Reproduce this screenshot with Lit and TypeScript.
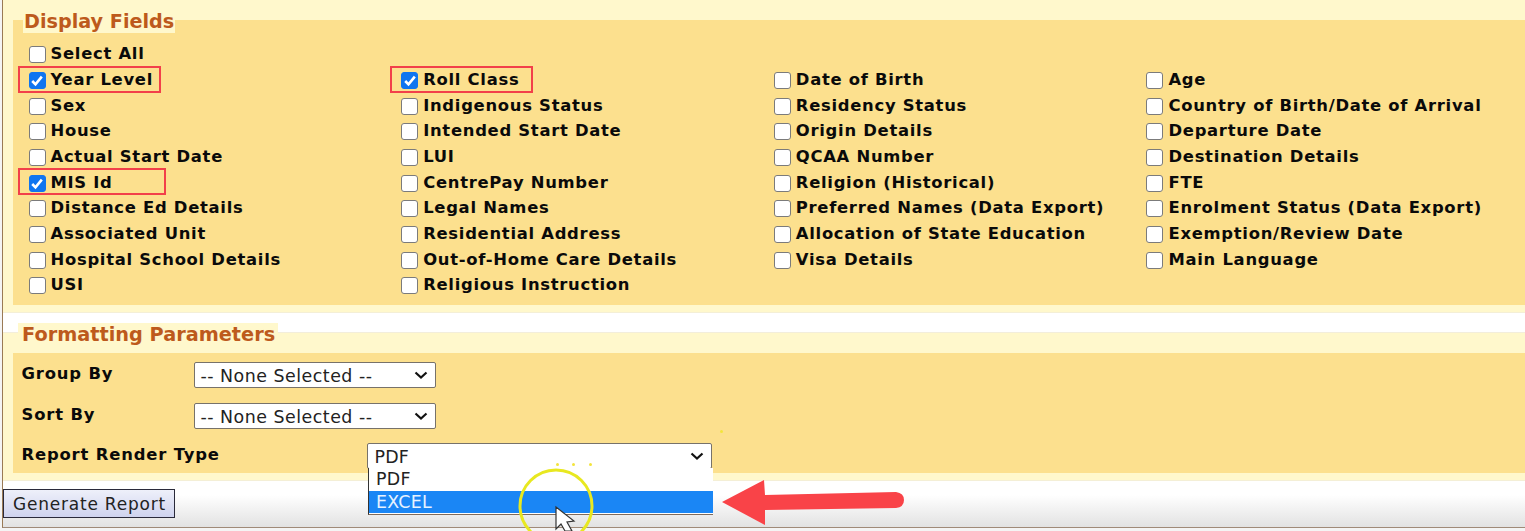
import { LitElement, html, css, svg } from "lit";
import { customElement } from "lit/decorators.js";

const fields: [string, boolean][] = [
  ["Select All", false], ["", false], ["", false], ["", false],
  ["Year Level", true], ["Roll Class", true], ["Date of Birth", false], ["Age", false],
  ["Sex", false], ["Indigenous Status", false], ["Residency Status", false], ["Country of Birth/Date of Arrival", false],
  ["House", false], ["Intended Start Date", false], ["Origin Details", false], ["Departure Date", false],
  ["Actual Start Date", false], ["LUI", false], ["QCAA Number", false], ["Destination Details", false],
  ["MIS Id", true], ["CentrePay Number", false], ["Religion (Historical)", false], ["FTE", false],
  ["Distance Ed Details", false], ["Legal Names", false], ["Preferred Names (Data Export)", false], ["Enrolment Status (Data Export)", false],
  ["Associated Unit", false], ["Residential Address", false], ["Allocation of State Education", false], ["Exemption/Review Date", false],
  ["Hospital School Details", false], ["Out-of-Home Care Details", false], ["Visa Details", false], ["Main Language", false],
  ["USI", false], ["Religious Instruction", false], ["", false], ["", false],
];

const chevron = svg`<svg class="chev" width="14" height="8" viewBox="0 0 14 8"><path d="M1.5 1.5 L7 6.5 L12.5 1.5" fill="none" stroke="#111" stroke-width="2.2"/></svg>`;

@customElement("app-root")
export class AppRoot extends LitElement {
  static styles = css`
    :host { display: block; width: 1525px; height: 531px; position: relative; overflow: hidden; background: #f4f4f4;
      font-family: "DejaVu Sans", Verdana, sans-serif; color: #0a0a0a; }
    .frame { height: 528px; border-left: 1.5px solid #9a7a55; border-bottom: 1px solid #a08a78; box-sizing: border-box; margin-left: 2px;
      display: flex; flex-direction: column; background: linear-gradient(#fff 0, #fff 495px, #e2e2e2 527px); }
    .top { background: #fff8cc; padding: 20px 0 7px 9.5px; position: relative; border-bottom: 1px solid #f4efd6; }
    .panel { background: #fce08e; }
    .legend { position: absolute; font-weight: 700; color: #bd5a1c; background: #fff8cc; white-space: nowrap; }
    .l1 { left: 20px; top: 11px; font-size: 19.2px; line-height: 22px; height: 22px; padding: 0 1px; }
    .l2 { left: 15px; top: -10px; font-size: 19.3px; line-height: 24px; padding: 0 3px 0 4px; }
    .grid { display: grid; grid-template-columns: repeat(4, 372.67px); grid-auto-rows: 25.67px; padding: 21px 0 7px 16px; }
    .cell { display: flex; align-items: center; gap: 5px; font-weight: 700; font-size: 16.4px; letter-spacing: 0.72px; white-space: nowrap; position: relative; }
    .box { width: 17px; height: 17px; box-sizing: border-box; flex: none; border-radius: 3px; background: #fff; border: 1.3px solid #7b7b7b; display: flex; align-items: center; justify-content: center; margin-top: 2px; }
    .box.on { background: #0f75f0; border-color: #0f75f0; }
    .mark { position: absolute; border: 2px solid #f2404a; box-sizing: border-box; height: 27px; top: -1px; left: -11px; }
    .second { background: #fff8cc; padding: 20px 0 7px 9.5px; position: relative; border-bottom: 1px solid #f4efd6; margin-top: 20px; }
    .rule { position: absolute; left: 0; right: 0; top: -1px; height: 1px; background: #f3eedb; }
    .form { padding: 9px 0 0 9px; height: 120px; box-sizing: border-box; display: flex; flex-direction: column; }
    .row { display: flex; flex: none; align-items: flex-start; height: 41px; font-weight: 700; font-size: 16.4px; letter-spacing: 0.84px; }
    .row.r2 { height: 40px; }
    .row label { display: block; line-height: 22px; padding-top: 1px; }
    .select { background: #fff; border: 1px solid #77726a; border-radius: 2px; box-sizing: border-box; display: flex; align-items: center; justify-content: space-between;
      font-weight: 400; font-size: 17.4px; letter-spacing: 0.5px; padding: 2px 7px 0 6px; height: 26px; color: #222; position: relative; }
    .chev { margin-top: -1px; }
    .lab-g { width: 172px; flex: none; }
    .lab-r { width: 345px; flex: none; }
    .sel-g { width: 242px; }
    .sel-r { width: 345px; letter-spacing: 0.2px; padding-left: 7px; }
    .list { position: absolute; left: 368px; top: 468px; width: 345px; height: 47px; background: #fff; border-left: 1.5px solid #333; border-bottom: 1.5px solid #806a5a; box-sizing: border-box; font-size: 17.4px; letter-spacing: 0.3px; color: #222; }
    .opt { height: 22.5px; line-height: 22.5px; padding-left: 7px; }
    .opt.sel { background: #1a86f5; color: #e6f2ff; }
    .foot { padding: 8px 0 0 0; }
    .btn { display: inline-flex; align-items: center; height: 29px; width: 172px; box-sizing: border-box; padding: 1px 0 0 9px; border: 1.5px solid #2a2a3a;
      background: linear-gradient(#eef0fa, #cfd3ee); font-size: 17px; letter-spacing: 0.78px; color: #222; }
    .over { position: absolute; left: 0; top: 0; pointer-events: none; }
    .dot { position: absolute; width: 3px; height: 3px; background: #f3e43c; border-radius: 50%; }
  `;

  render() {
    return html`
      <div class="frame">
        <div class="top">
          <div class="legend l1">Display Fields</div>
          <div class="panel">
            <div class="grid">
              ${fields.map(([t, on]) =>
                t
                  ? html`<div class="cell">
                      <span class="box ${on ? "on" : ""}">
                        ${on ? svg`<svg width="14" height="13" viewBox="0 0 14 13"><path d="M2.2 7 L5.5 10.4 L11.8 2.6" fill="none" stroke="#fff" stroke-width="2.6"/></svg>` : ""}
                      </span>${t}
                      ${t === "Year Level" || t === "Roll Class" ? html`<span class="mark" style="width:143px"></span>` : ""}
                      ${t === "MIS Id" ? html`<span class="mark" style="width:148px"></span>` : ""}
                    </div>`
                  : html`<div></div>`
              )}
            </div>
          </div>
        </div>
        <div class="second">
          <div class="rule"></div>
          <div class="legend l2">Formatting Parameters</div>
          <div class="panel form">
            <div class="row"><label class="lab-g">Group By</label><div class="select sel-g">-- None Selected --${chevron}</div></div>
            <div class="row r2"><label class="lab-g">Sort By</label><div class="select sel-g">-- None Selected --${chevron}</div></div>
            <div class="row"><label class="lab-r">Report Render Type</label><div class="select sel-r">PDF${chevron}</div></div>
          </div>
        </div>
        <div class="foot"><div class="btn">Generate Report</div></div>
      </div>
      <div class="list"><div class="opt">PDF</div><div class="opt sel">EXCEL</div></div>
      <span class="dot" style="left:720px;top:430px"></span>
      <span class="dot" style="left:556px;top:463px"></span>
      <span class="dot" style="left:572px;top:463px"></span>
      <span class="dot" style="left:589px;top:463px"></span>
      <svg class="over" width="1525" height="531" viewBox="0 0 1525 531">
        <circle cx="556" cy="506" r="36" fill="none" stroke="#e8e820" stroke-width="3"/>
        <path d="M556 507 L556 529 L561 524 L565 531 L572 531 L567 522 L574 521 Z" fill="#fff" stroke="#333" stroke-width="1.2"/>
        <path d="M722 502 L764 480 L765 495 L896 492 Q904 493 904 500 Q904 507 896 508 L765 510 L765 525 Z" fill="#f94348"/>
      </svg>
    `;
  }
}
